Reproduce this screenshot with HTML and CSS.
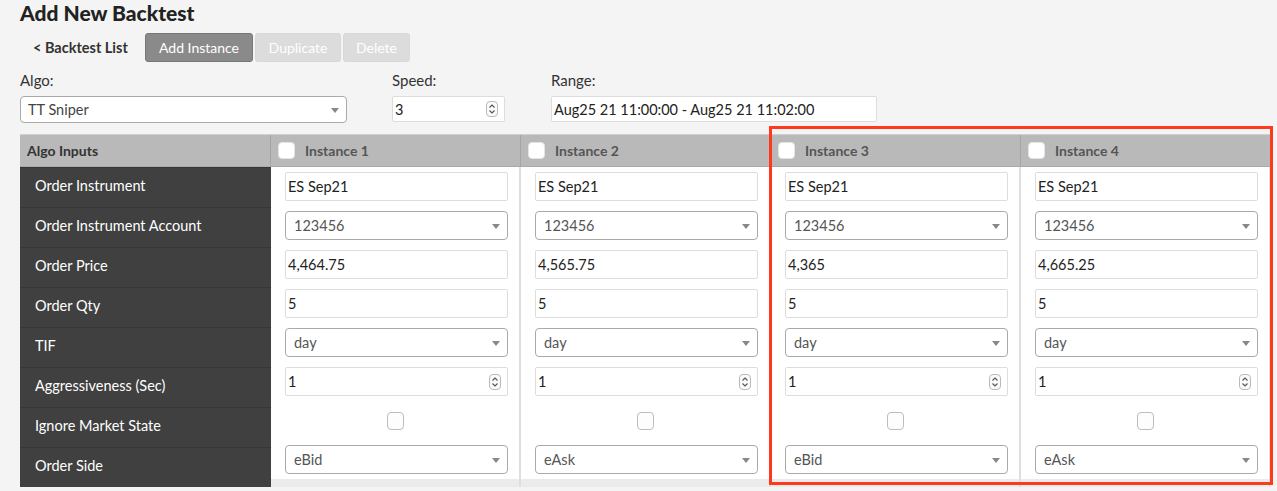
FILE: index.html
```html
<!DOCTYPE html>
<html>
<head>
<meta charset="utf-8">
<link rel="stylesheet" href="styles.css">
</head>
<body>
<div class="page">
  <h1 class="title">Add New Backtest</h1>
  <div class="toolbar">
    <a class="back">&lt; Backtest List</a>
    <button class="btn btn-primary">Add Instance</button>
    <button class="btn btn-disabled b-dup">Duplicate</button>
    <button class="btn btn-disabled b-del">Delete</button>
  </div>
  <div class="fields">
    <div class="field f-algo">
      <div class="label">Algo:</div>
      <div class="select big"><span>TT Sniper</span><i class="caret"></i></div>
    </div>
    <div class="field f-speed">
      <div class="label">Speed:</div>
      <div class="text big num"><span>3</span><i class="spin"><svg width="10" height="14" viewBox="0 0 10 14"><path d="M2.5 5.5 L5 3 L7.5 5.5 M2.5 8.5 L5 11 L7.5 8.5" fill="none" stroke="#555" stroke-width="1.1"/></svg></i></div>
    </div>
    <div class="field f-range">
      <div class="label">Range:</div>
      <div class="text big"><span>Aug25 21 11:00:00 - Aug25 21 11:02:00</span></div>
    </div>
  </div>

  <div class="grid">
    <div class="col-labels">
      <div class="head">Algo Inputs</div>
      <div class="lrow">Order Instrument</div>
      <div class="lrow">Order Instrument Account</div>
      <div class="lrow">Order Price</div>
      <div class="lrow">Order Qty</div>
      <div class="lrow">TIF</div>
      <div class="lrow">Aggressiveness (Sec)</div>
      <div class="lrow">Ignore Market State</div>
      <div class="lrow">Order Side</div>
    </div>

    <div class="col-inst">
      <div class="head"><i class="cb"></i>Instance 1</div>
      <div class="irow"><div class="text"><span>ES Sep21</span></div></div>
      <div class="irow"><div class="select"><span>123456</span><i class="caret"></i></div></div>
      <div class="irow"><div class="text"><span>4,464.75</span></div></div>
      <div class="irow"><div class="text"><span>5</span></div></div>
      <div class="irow"><div class="select"><span>day</span><i class="caret"></i></div></div>
      <div class="irow"><div class="text num"><span>1</span><i class="spin"><svg width="10" height="14" viewBox="0 0 10 14"><path d="M2.5 5.5 L5 3 L7.5 5.5 M2.5 8.5 L5 11 L7.5 8.5" fill="none" stroke="#555" stroke-width="1.1"/></svg></i></div></div>
      <div class="irow center"><i class="cb small"></i></div>
      <div class="irow"><div class="select"><span>eBid</span><i class="caret"></i></div></div>
      <div class="strip"></div>
    </div>

    <div class="col-inst">
      <div class="head"><i class="cb"></i>Instance 2</div>
      <div class="irow"><div class="text"><span>ES Sep21</span></div></div>
      <div class="irow"><div class="select"><span>123456</span><i class="caret"></i></div></div>
      <div class="irow"><div class="text"><span>4,565.75</span></div></div>
      <div class="irow"><div class="text"><span>5</span></div></div>
      <div class="irow"><div class="select"><span>day</span><i class="caret"></i></div></div>
      <div class="irow"><div class="text num"><span>1</span><i class="spin"><svg width="10" height="14" viewBox="0 0 10 14"><path d="M2.5 5.5 L5 3 L7.5 5.5 M2.5 8.5 L5 11 L7.5 8.5" fill="none" stroke="#555" stroke-width="1.1"/></svg></i></div></div>
      <div class="irow center"><i class="cb small"></i></div>
      <div class="irow"><div class="select"><span>eAsk</span><i class="caret"></i></div></div>
      <div class="strip"></div>
    </div>

    <div class="col-inst">
      <div class="head"><i class="cb"></i>Instance 3</div>
      <div class="irow"><div class="text"><span>ES Sep21</span></div></div>
      <div class="irow"><div class="select"><span>123456</span><i class="caret"></i></div></div>
      <div class="irow"><div class="text"><span>4,365</span></div></div>
      <div class="irow"><div class="text"><span>5</span></div></div>
      <div class="irow"><div class="select"><span>day</span><i class="caret"></i></div></div>
      <div class="irow"><div class="text num"><span>1</span><i class="spin"><svg width="10" height="14" viewBox="0 0 10 14"><path d="M2.5 5.5 L5 3 L7.5 5.5 M2.5 8.5 L5 11 L7.5 8.5" fill="none" stroke="#555" stroke-width="1.1"/></svg></i></div></div>
      <div class="irow center"><i class="cb small"></i></div>
      <div class="irow"><div class="select"><span>eBid</span><i class="caret"></i></div></div>
      <div class="strip"></div>
    </div>

    <div class="col-inst">
      <div class="head"><i class="cb"></i>Instance 4</div>
      <div class="irow"><div class="text"><span>ES Sep21</span></div></div>
      <div class="irow"><div class="select"><span>123456</span><i class="caret"></i></div></div>
      <div class="irow"><div class="text"><span>4,665.25</span></div></div>
      <div class="irow"><div class="text"><span>5</span></div></div>
      <div class="irow"><div class="select"><span>day</span><i class="caret"></i></div></div>
      <div class="irow"><div class="text num"><span>1</span><i class="spin"><svg width="10" height="14" viewBox="0 0 10 14"><path d="M2.5 5.5 L5 3 L7.5 5.5 M2.5 8.5 L5 11 L7.5 8.5" fill="none" stroke="#555" stroke-width="1.1"/></svg></i></div></div>
      <div class="irow center"><i class="cb small"></i></div>
      <div class="irow"><div class="select"><span>eAsk</span><i class="caret"></i></div></div>
      <div class="strip"></div>
    </div>

    <div class="highlight"></div>
  </div>
</div>
</body>
</html>
```

FILE: styles.css
```css
* { box-sizing: border-box; }
html, body { margin: 0; padding: 0; }
body {
  background: #f4f4f4;
  font-family: Lato, "Open Sans", sans-serif;
  color: #333;
  width: 1277px;
  height: 491px;
  overflow: hidden;
}
.page { padding: 0 0 0 20px; }
.title {
  margin: 0;
  font-size: 21px;
  line-height: 26px;
  font-weight: 900;
  color: #222;
}
.toolbar {
  display: flex;
  align-items: center;
  height: 29px;
  margin-top: 7px;
  padding-left: 13px;
}
.back {
  font-size: 14.5px;
  font-weight: 700;
  color: #333;
  width: 99px;
  white-space: nowrap;
  margin-right: 13px;
}
.btn {
  height: 29px;
  border-radius: 3px;
  font-family: Lato, sans-serif;
  font-size: 14px;
  color: #fff;
  padding: 0;
  margin-right: 2px;
  border: 1px solid #d6d6d6;
}
.btn-primary { background: #8a8a8a; border-color: #777; width: 108px; }
.btn-disabled { background: #dcdcdc; border-color: #d8d8d8; }
.b-dup { width: 86px; }
.b-del { width: 67px; }

.fields {
  display: flex;
  margin-top: 9px;
}
.label {
  font-size: 15px;
  line-height: 18px;
  margin-bottom: 7px;
  color: #333;
}
.f-algo { width: 327px; margin-right: 45px; }
.f-speed { width: 113px; margin-right: 46px; }
.f-range { width: 326px; }

.text, .select {
  position: relative;
  display: flex;
  align-items: center;
  background: #fff;
  font-size: 14.5px;
  width: 223px;
}
.text {
  height: 29px;
  border: 1px solid #ddd;
  border-radius: 2px;
  padding-left: 2px;
  color: #222;
}
.select {
  height: 29px;
  border: 1px solid #aaa;
  border-radius: 4px;
  padding-left: 8px;
  color: #555;
}
.big { width: 100%; height: 27px; }
.f-algo .select { padding-left: 7px; color: #444; }
.f-speed .text, .f-range .text { height: 26px; }
.caret {
  position: absolute;
  right: 7px;
  top: 50%;
  margin-top: -2px;
  width: 0; height: 0;
  border-left: 4px solid transparent;
  border-right: 4px solid transparent;
  border-top: 5px solid #888;
}
.spin {
  position: absolute;
  right: 6px;
  top: 50%;
  margin-top: -8px;
  width: 12px;
  height: 16px;
  border: 1px solid #bbb;
  border-radius: 4px;
  display: flex;
  align-items: center;
  justify-content: center;
  background: #fafafa;
}

.grid {
  position: relative;
  display: flex;
  margin-top: 11px;
  width: 1251px;
  border-top: 1px solid #d0d0d0;
}
.head {
  height: 32px;
  background: #b9b9b9;
  display: flex;
  align-items: center;
  font-size: 14px;
  font-weight: 700;
  border-bottom: 1px solid #aaa;
}
.col-labels { width: 251px; background: #404040; }
.col-labels .head { padding-left: 7px; color: #333; border-right: 1px solid #a5a5a5; }
.lrow {
  height: 40px;
  display: flex;
  align-items: center;
  padding-left: 15px;
  padding-bottom: 5px;
  color: #fff;
  font-size: 14.5px;
  border-top: 1px solid #363636;
}
.col-inst {
  width: 250px;
  background: #fff;
  border-right: 2px solid #dedede;
}
.col-inst .head {
  padding-left: 7px;
  color: #555;
  margin-right: -2px;
  box-shadow: inset -1px 0 0 #a5a5a5;
}
.cb {
  display: inline-block;
  width: 17px;
  height: 17px;
  background: #fff;
  border-radius: 4px;
  border: 1px solid #e4e4e4;
  margin-right: 10px;
}
.cb.small {
  margin: 0;
  width: 17px; height: 18px;
  border: 1px solid #bdbdbd;
  background: #fdfdfd;
}
.irow {
  height: 39px;
  display: flex;
  align-items: center;
  padding-left: 14px;
}
.irow.center { justify-content: center; padding-left: 0; }
.strip { height: 8px; background: #ebebeb; }
.highlight {
  position: absolute;
  left: 749px;
  top: -9px;
  width: 504px;
  height: 359px;
  border: 3px solid #ff3a1c;
  pointer-events: none;
}
```
